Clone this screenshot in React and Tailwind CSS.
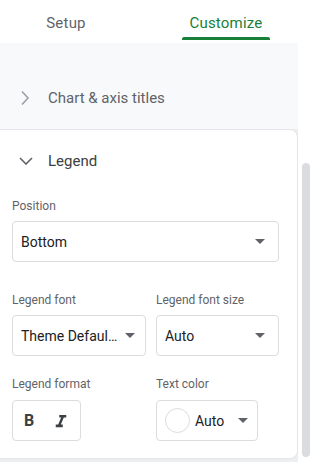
import React from "react";

const Caret = () => (
  <svg width="10" height="5" viewBox="0 0 10 5" className="shrink-0">
    <path d="M0 0h10L5 5z" fill="#5f6368" />
  </svg>
);

const Select = ({ value, className = "" }) => (
  <div
    className={`h-[41px] flex items-center justify-between border border-[#dadce0] rounded-[4px] bg-white pl-[8px] pr-[13px] ${className}`}
  >
    <span className="text-[14px] leading-[20px] text-[#202124] whitespace-nowrap">{value}</span>
    <Caret />
  </div>
);

const Label = ({ children }) => (
  <div className="text-[12px] leading-[16px] text-[#5f6368] whitespace-nowrap">{children}</div>
);

const App = () => {
  return (
    <div
      className="w-[313px] h-[462px] overflow-hidden bg-white flex flex-col"
      style={{ fontFamily: "Roboto, 'Liberation Sans', sans-serif" }}
    >
      {/* Tabs */}
      <div className="h-[43px] flex shrink-0">
        <div className="w-[132px] pt-[13px] text-center text-[15px] leading-[20px] tracking-[0.2px] text-[#5f6368]">
          Setup
        </div>
        <div className="ml-[28px] w-[132px] pt-[13px] flex flex-col items-center">
          <span className="text-[15px] leading-[20px] tracking-[0.2px] text-[#188038]">Customize</span>
          <div className="mt-[4px] w-[88px] h-[3px] rounded-t-[2px] bg-[#188038]"></div>
        </div>
      </div>

      {/* Body */}
      <div className="flex flex-1 min-h-0">
        <div className="w-[298px] bg-[#eceef0] flex flex-col">
          <div className="h-[86px] bg-[#f8f9fa] flex items-start pt-[45px] pl-[20px]">
            <svg width="10" height="16" viewBox="0 0 10 16" className="mt-[2px]">
              <path d="M2 1.5L8 8l-6 6.5" fill="none" stroke="#9aa0a6" strokeWidth="1.6" />
            </svg>
            <span className="ml-[18px] text-[15px] leading-[20px] text-[#5f6368]">
              Chart &amp; axis titles
            </span>
          </div>

          {/* Legend card */}
          <div className="h-[330px] bg-white border-t border-r border-b border-[#e3e5e8] rounded-r-[8px] flex flex-col px-[12px]">
            <div className="flex items-center pt-[21px] pl-[7px]">
              <svg width="14" height="8" viewBox="0 0 14 8">
                <path d="M1 1l6 6 6-6" fill="none" stroke="#5f6368" strokeWidth="1.6" />
              </svg>
              <span className="ml-[15px] text-[15px] leading-[20px] text-[#3c4043]">Legend</span>
            </div>

            <div className="mt-[27px]">
              <Label>Position</Label>
            </div>
            <Select value="Bottom" className="mt-[7px] w-[267px]" />

            <div className="mt-[30px] flex gap-[10px]">
              <div className="w-[134px]">
                <Label>Legend font</Label>
                <Select value="Theme Defaul…" className="mt-[7px] !pr-[10px]" />
              </div>
              <div className="w-[123px]">
                <Label>Legend font size</Label>
                <Select value="Auto" className="mt-[7px]" />
              </div>
            </div>

            <div className="mt-[20px] flex">
              <div className="w-[144px]">
                <Label>Legend format</Label>
                <div className="mt-[8px] w-[69px] h-[41px] border border-[#dadce0] rounded-[4px] flex items-center pl-[11px] gap-[20px]">
                  <span className="text-[16px] leading-[20px] font-bold text-[#3c4043]">B</span>
                  <svg width="14" height="14" viewBox="5 3 14 16">
                    <path d="M10 4v3h2.21l-3.42 8H6v3h8v-3h-2.21l3.42-8H18V4z" fill="#3c4043" />
                  </svg>
                </div>
              </div>
              <div>
                <Label>Text color</Label>
                <div className="mt-[8px] w-[102px] h-[41px] border border-[#dadce0] rounded-[4px] flex items-center pl-[8px]">
                  <div className="w-[25px] h-[25px] rounded-full border border-[#dadce0] bg-white"></div>
                  <span className="ml-[5px] text-[14px] leading-[20px] text-[#202124]">Auto</span>
                  <span className="ml-[14px]">
                    <Caret />
                  </span>
                </div>
              </div>
            </div>
          </div>
        </div>

        {/* Scrollbar */}
        <div className="w-[15px] bg-white">
          <div className="ml-[4px] mt-[120px] w-[8px] h-[294px] rounded-full bg-[#dadce0]"></div>
        </div>
      </div>
    </div>
  );
};

export default App;
